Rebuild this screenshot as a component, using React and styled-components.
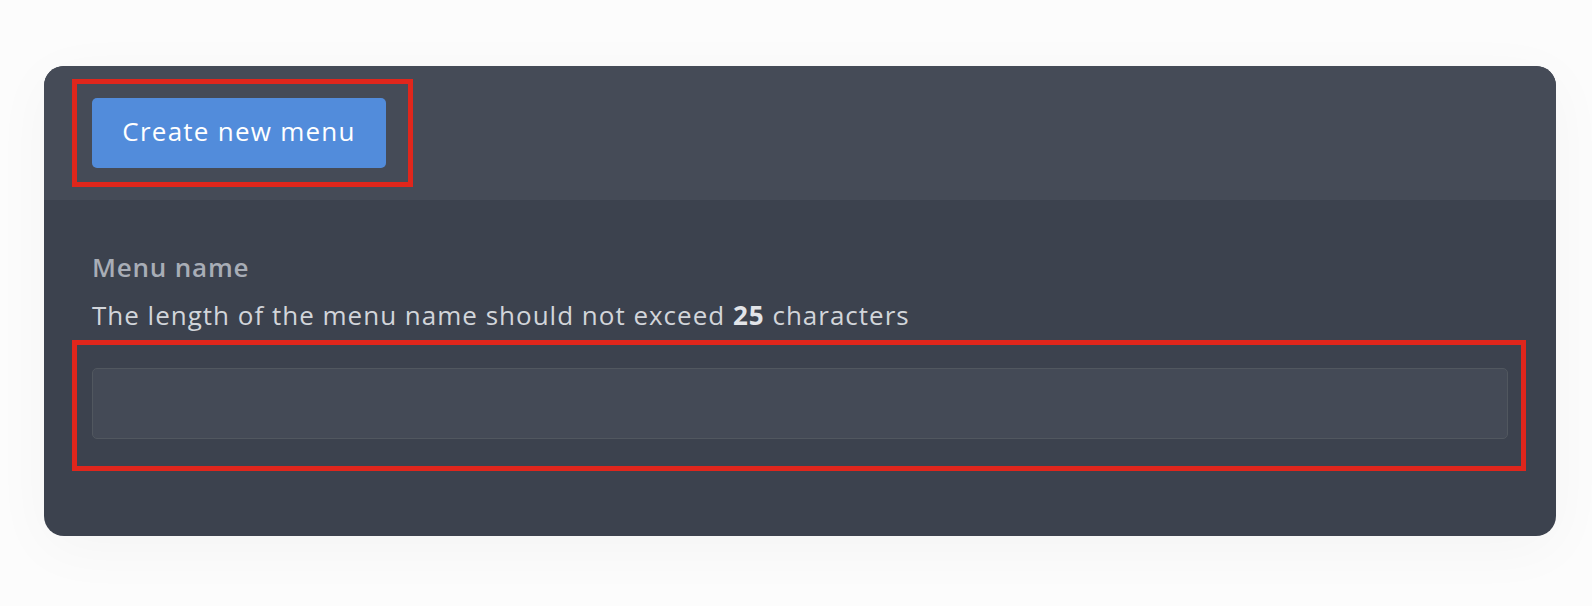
import React from "react";
import styled, { createGlobalStyle } from "styled-components";

const GlobalStyle = createGlobalStyle`
  html, body {
    margin: 0;
    padding: 0;
    background: #fcfcfc;
  }
  body {
    font-family: "Open Sans", "Noto Sans", sans-serif;
  }
  * { box-sizing: border-box; }
`;

const Page = styled.div`
  width: 1592px;
  height: 606px;
  padding: 66px 36px 0 44px;
  background: #fcfcfc;
`;

const Card = styled.section`
  position: relative;
  width: 1512px;
  height: 470px;
  border-radius: 20px;
  overflow: hidden;
  background: #3c424e;
  box-shadow: 0 12px 60px rgba(0, 0, 0, 0.035);
  display: flex;
  flex-direction: column;
`;

const Header = styled.header`
  position: relative;
  height: 134px;
  padding: 32px 48px;
  background: #454b57;
  display: flex;
  align-items: center;
`;

const PrimaryButton = styled.button`
  width: 294px;
  height: 70px;
  border: none;
  border-radius: 5px;
  background: #528cdb;
  color: #ffffff;
  font-family: "Open Sans", "Noto Sans", sans-serif;
  font-size: 26px;
  font-weight: 400;
  letter-spacing: 1.25px;
  padding: 0 0 4px;
  cursor: pointer;
`;

const Body = styled.div`
  padding: 49px 48px 0;
  display: flex;
  flex-direction: column;
`;

const Label = styled.label`
  font-size: 26px;
  line-height: 36px;
  font-weight: 600;
  letter-spacing: 0.8px;
  color: #a8adb6;
`;

const Hint = styled.p`
  margin: 12px 0 0;
  font-size: 26px;
  line-height: 36px;
  font-weight: 400;
  letter-spacing: 1px;
  color: #d2d5da;

  strong {
    font-weight: 700;
    color: #e2e4e8;
  }
`;

const FieldWrap = styled.div`
  position: relative;
  margin-top: 35px;
`;

const TextInput = styled.input`
  display: block;
  width: 100%;
  height: 71px;
  border: 1px solid #51575f;
  border-radius: 5px;
  background: #444a56;
  color: #e2e4e8;
  font-family: inherit;
  font-size: 24px;
  padding: 0 20px;
  outline: none;
`;

const Highlight = styled.div`
  position: absolute;
  left: ${(p) => p.$left}px;
  top: ${(p) => p.$top}px;
  width: ${(p) => p.$width}px;
  height: ${(p) => p.$height}px;
  border: 5px solid #e0261c;
  pointer-events: none;
`;

export default function App() {
  return (
    <>
      <GlobalStyle />
      <Page>
        <Card>
          <Header>
            <PrimaryButton type="button">Create new menu</PrimaryButton>
            <Highlight $left={28} $top={13} $width={341} $height={108} />
          </Header>
          <Body>
            <Label htmlFor="menu-name">Menu name</Label>
            <Hint>
              The length of the menu name should not exceed <strong>25</strong> characters
            </Hint>
            <FieldWrap>
              <TextInput id="menu-name" type="text" />
              <Highlight $left={-20} $top={-28} $width={1454} $height={131} />
            </FieldWrap>
          </Body>
        </Card>
      </Page>
    </>
  );
}
